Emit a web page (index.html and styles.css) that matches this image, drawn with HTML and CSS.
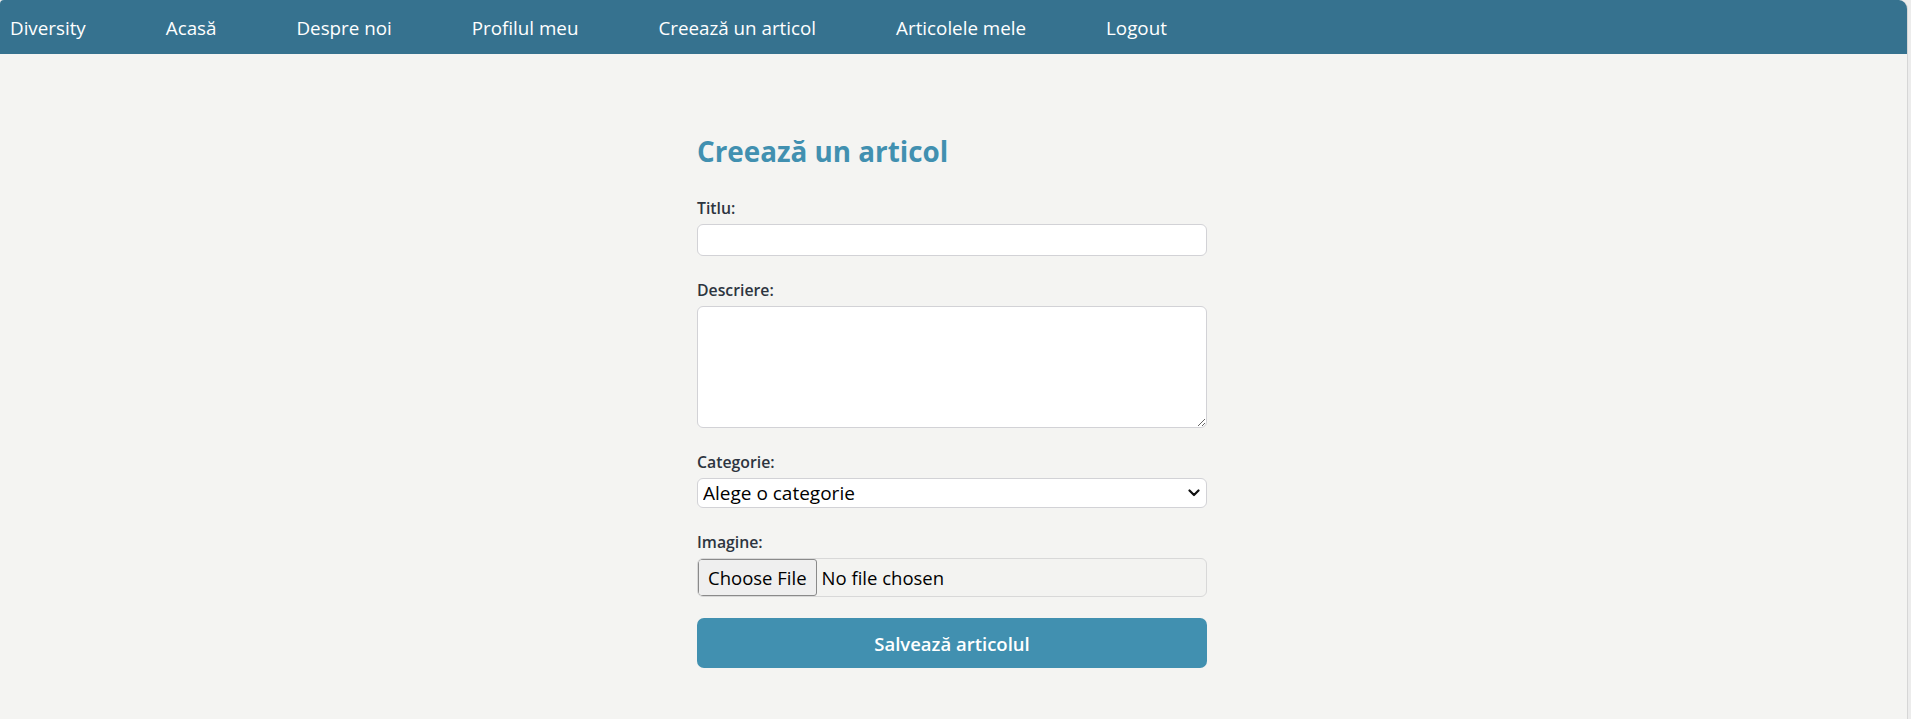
FILE: index.html
```html
<!DOCTYPE html>
<html lang="ro">
<head>
<meta charset="utf-8">
<title>Creează un articol</title>
<link rel="stylesheet" href="styles.css">
</head>
<body>
<div class="page">
  <nav class="nav">
    <a class="nav-link" href="#">Diversity</a>
    <a class="nav-link" href="#">Acasă</a>
    <a class="nav-link" href="#">Despre noi</a>
    <a class="nav-link" href="#">Profilul meu</a>
    <a class="nav-link" href="#">Creează un articol</a>
    <a class="nav-link" href="#">Articolele mele</a>
    <a class="nav-link" href="#">Logout</a>
  </nav>
  <main class="main">
    <form class="form">
      <h1 class="title">Creează un articol</h1>
      <div class="group">
        <label class="label" for="titlu">Titlu:</label>
        <input class="field input" id="titlu" type="text">
      </div>
      <div class="group">
        <label class="label" for="descriere">Descriere:</label>
        <textarea class="field textarea" id="descriere"></textarea>
      </div>
      <div class="group">
        <label class="label" for="categorie">Categorie:</label>
        <div class="select-wrap">
          <select class="field select" id="categorie">
            <option>Alege o categorie</option>
          </select>
          <svg class="chevron" width="12" height="8" viewBox="0 0 12 8"><path d="M1.5 1.5 L6 6 L10.5 1.5" fill="none" stroke="#111" stroke-width="2.2" stroke-linecap="round" stroke-linejoin="round"/></svg>
        </div>
      </div>
      <div class="group group-last">
        <label class="label" for="imagine">Imagine:</label>
        <input class="file" id="imagine" type="file">
      </div>
      <button class="submit" type="button">Salvează articolul</button>
    </form>
  </main>
</div>
</body>
</html>
```
FILE: styles.css
```css
html {
  background: #ececec;
}
body {
  margin: 0;
  font-family: "Open Sans", "Noto Sans", sans-serif;
}
.page {
  margin-right: 3px;
  border-right: 1px solid #d6d6d6;
  min-height: 719px;
  background: #f4f4f2;
  border-radius: 4px 9px 0 0;
  overflow: hidden;
}
.nav {
  height: 54px;
  display: flex;
  align-items: center;
  gap: 80px;
  padding-left: 10px;
  background: #36728f;
}
.nav-link {
  color: #fff;
  text-decoration: none;
  font-size: 18.8px;
  line-height: 24px;
  padding-top: 2px;
}
.main {
  display: flex;
  justify-content: center;
  padding-top: 80px;
  padding-right: 3px;
}
.form {
  width: 510px;
}
.title {
  margin: 0 0 30px;
  font-size: 27.8px;
  line-height: 34px;
  font-weight: 700;
  color: #4190b0;
}
.group {
  margin-bottom: 24px;
}
.group-last {
  margin-bottom: 21px;
}
.label {
  display: block;
  font-size: 15.8px;
  line-height: 20px;
  font-weight: 600;
  color: #2d3540;
  margin-bottom: 6px;
}
.field {
  display: block;
  box-sizing: border-box;
  width: 100%;
  background: #fff;
  border: 1px solid #d2d2d6;
  border-radius: 6px;
  font-family: inherit;
  margin: 0;
}
.input {
  height: 32px;
  padding: 4px 8px;
  font-size: 16px;
}
.textarea {
  height: 122px;
  padding: 6px 8px;
  font-size: 16px;
}
.select-wrap {
  position: relative;
}
.select {
  height: 30px;
  padding: 0 30px 0 5px;
  font-size: 19px;
  color: #000;
  appearance: none;
  -webkit-appearance: none;
  line-height: 28px;
}
.chevron {
  position: absolute;
  right: 7px;
  top: 11px;
}
.file {
  display: block;
  box-sizing: border-box;
  width: 100%;
  height: 39px;
  padding: 0;
  border: 1px solid #d8d8d8;
  border-radius: 6px;
  background: #f3f3f1;
  font-family: inherit;
  font-size: 18.5px;
  color: #000;
}
.file::file-selector-button {
  height: 37px;
  margin: 0 5px 0 0;
  padding: 0 9px;
  border: 1px solid #8a8a8a;
  border-radius: 3px;
  background: #efefef;
  font-family: inherit;
  font-size: 18.5px;
  color: #000;
}
.submit {
  display: block;
  width: 100%;
  height: 50px;
  border: none;
  border-radius: 7px;
  background: #4190b0;
  color: #fff;
  font-family: inherit;
  font-size: 18.5px;
  font-weight: 600;
  cursor: pointer;
}
```
